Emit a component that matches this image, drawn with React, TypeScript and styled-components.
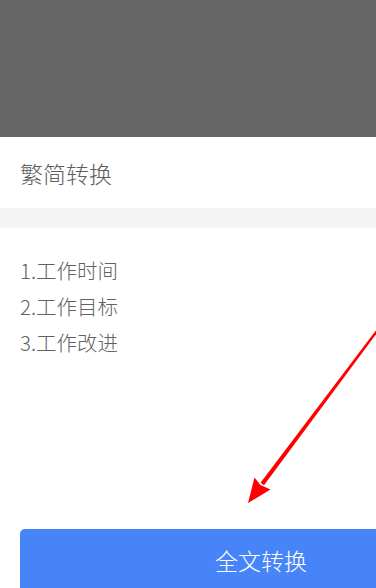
import React from "react";
import styled, { createGlobalStyle } from "styled-components";

const Global = createGlobalStyle`
  html, body { margin: 0; padding: 0; background: #ffffff; }
  body { font-family: "Noto Sans CJK SC", "Noto Sans", sans-serif; }
  #root { width: 376px; height: 588px; overflow: hidden; }
`;

const Page = styled.div`
  position: relative;
  width: 376px;
  height: 588px;
  overflow: hidden;
  display: flex;
  flex-direction: column;
  background: #ffffff;
`;

const Preview = styled.div`
  height: 137px;
  flex: none;
  background: #666666;
`;

const Header = styled.div`
  height: 71px;
  flex: none;
  display: flex;
  align-items: center;
  padding-left: 20px;
  font-size: 23px;
  font-weight: 300;
  color: #5e5e5e;
`;

const Band = styled.div`
  height: 20px;
  flex: none;
  background: #f4f4f4;
`;

const List = styled.div`
  padding: 24px 0 0 20px;
  display: flex;
  flex-direction: column;
`;

const Item = styled.div`
  height: 36px;
  line-height: 36px;
  font-size: 20.5px;
  font-weight: 300;
  color: #626262;
`;

const Spacer = styled.div`
  flex: 1;
`;

const ConvertButton = styled.button`
  flex: none;
  margin: 0 0 -5px 20px;
  width: 482px;
  height: 64px;
  border: none;
  border-radius: 5px;
  background: #4784f7;
  color: #ffffff;
  font-family: "Noto Sans CJK SC", "Noto Sans", sans-serif;
  font-size: 23px;
  font-weight: 300;
  display: flex;
  align-items: flex-start;
  justify-content: center;
  padding-top: 14px;
  box-sizing: border-box;
`;

const ArrowLayer = styled.svg`
  position: absolute;
  left: 0;
  top: 0;
  width: 376px;
  height: 588px;
  pointer-events: none;
`;

export default function App() {
  const items = ["1.工作时间", "2.工作目标", "3.工作改进"];
  return (
    <>
      <Global />
      <Page>
        <Preview />
        <Header>繁简转换</Header>
        <Band />
        <List>
          {items.map((t) => (
            <Item key={t}>{t}</Item>
          ))}
        </List>
        <Spacer />
        <ConvertButton>全文转换</ConvertButton>
        <ArrowLayer viewBox="0 0 376 588">
          <polygon
            fill="#ff0000"
            points="380,328.8 378.2,327.4 260.5,482.7 264,485.3"
          />
          <polygon
            fill="#ff0000"
            points="248,503 254.5,477.5 260.5,485 270.5,489.5"
          />
        </ArrowLayer>
      </Page>
    </>
  );
}
